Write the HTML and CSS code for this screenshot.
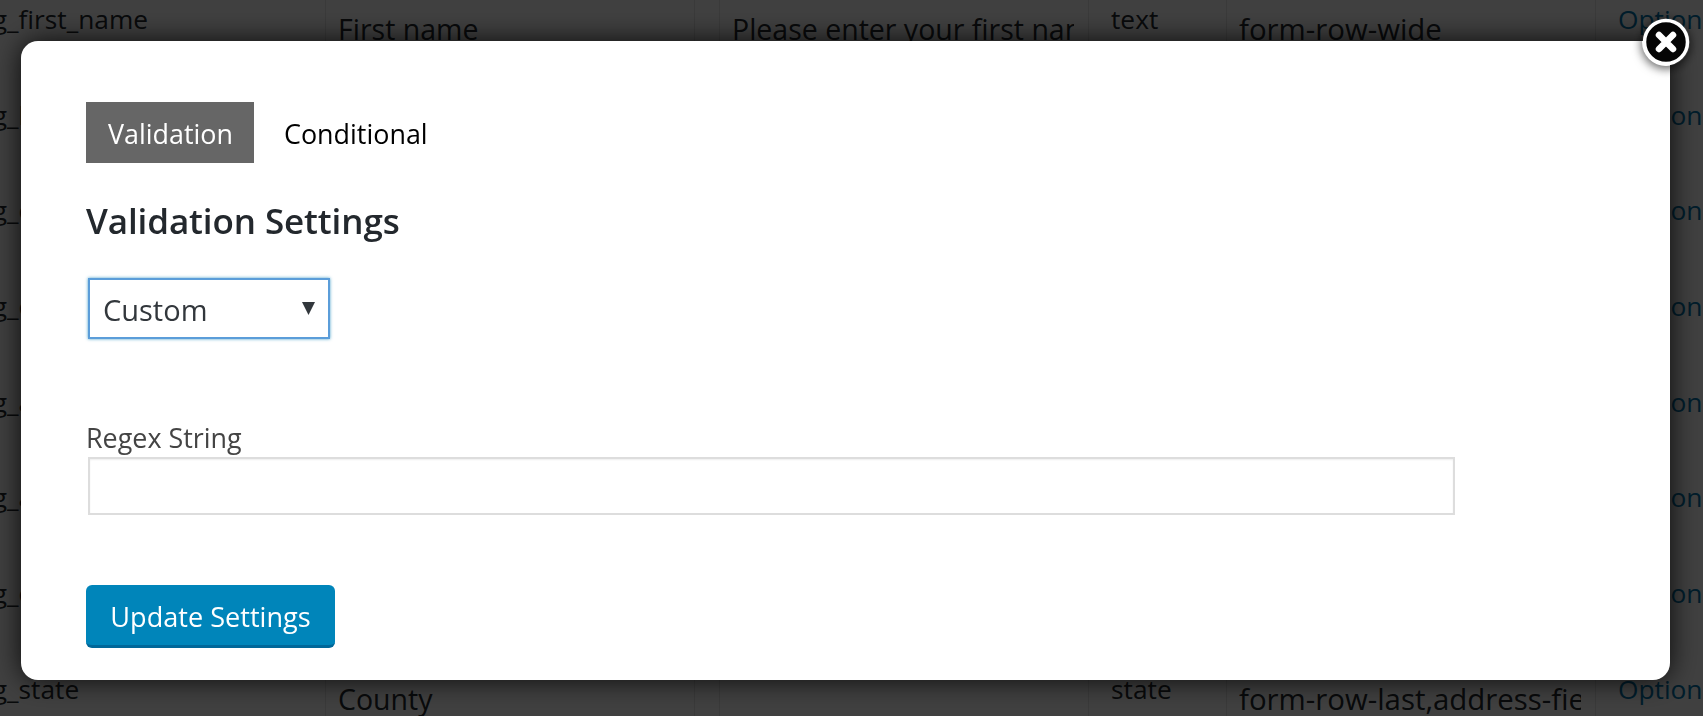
FILE: index.html
```
<!DOCTYPE html>
<html lang="en">
<head>
<meta charset="utf-8">
<title>Validation Settings</title>
<link rel="stylesheet" href="styles.css">
</head>
<body>
<div class="fields">
  <div class="row"><div class="cell key">billing_first_name</div><div class="cell box"><span class="val">First name</span></div><div class="gap"></div><div class="cell box"><span class="val">Please enter your first name</span></div><div class="cell type">text</div><div class="cell box wide"><span class="val">form-row-wide</span></div><div class="cell opt"><a>Options</a></div></div>
  <div class="row"><div class="cell key">billing_last_name</div><div class="cell box"><span class="val">Last name</span></div><div class="gap"></div><div class="cell box"><span class="val">Please enter your last name</span></div><div class="cell type">text</div><div class="cell box wide"><span class="val">form-row-wide</span></div><div class="cell opt"><a>Options</a></div></div>
  <div class="row"><div class="cell key">billing_company</div><div class="cell box"><span class="val">Company</span></div><div class="gap"></div><div class="cell box"></div><div class="cell type">text</div><div class="cell box wide"><span class="val">form-row-wide</span></div><div class="cell opt"><a>Options</a></div></div>
  <div class="row"><div class="cell key">billing_country</div><div class="cell box"><span class="val">Country</span></div><div class="gap"></div><div class="cell box"></div><div class="cell type">country</div><div class="cell box wide"><span class="val">form-row-wide</span></div><div class="cell opt"><a>Options</a></div></div>
  <div class="row"><div class="cell key">billing_address_1</div><div class="cell box"><span class="val">Address</span></div><div class="gap"></div><div class="cell box"></div><div class="cell type">text</div><div class="cell box wide"><span class="val">form-row-wide</span></div><div class="cell opt"><a>Options</a></div></div>
  <div class="row"><div class="cell key">billing_address_2</div><div class="cell box"><span class="val">Address 2</span></div><div class="gap"></div><div class="cell box"></div><div class="cell type">text</div><div class="cell box wide"><span class="val">form-row-wide</span></div><div class="cell opt"><a>Options</a></div></div>
  <div class="row"><div class="cell key">billing_city</div><div class="cell box"><span class="val">City</span></div><div class="gap"></div><div class="cell box"></div><div class="cell type">text</div><div class="cell box wide"><span class="val">form-row-wide</span></div><div class="cell opt"><a>Options</a></div></div>
  <div class="row"><div class="cell key">billing_state</div><div class="cell box"><span class="val">County</span></div><div class="gap"></div><div class="cell box"></div><div class="cell type">state</div><div class="cell box wide"><span class="val">form-row-last,address-field</span></div><div class="cell opt"><a>Options</a></div></div>
</div>
<div class="overlay"></div>
<div class="modal">
  <button class="close" type="button" aria-label="Close">
    <svg viewBox="0 0 48 48" width="48" height="48" aria-hidden="true"><circle cx="24" cy="24" r="21.5" fill="#050505" stroke="#fff" stroke-width="3.5"/><path d="M17 17L31 31M31 17L17 31" stroke="#fff" stroke-width="6.5" stroke-linecap="round" fill="none"/></svg>
  </button>
  <nav class="tabs"><a class="tab active">Validation</a><a class="tab">Conditional</a></nav>
  <h2 class="title">Validation Settings</h2>
  <div class="select-wrap">
    <select class="select"><option>Custom</option></select>
    <svg class="caret" viewBox="0 0 13 13" width="13" height="13" aria-hidden="true"><path d="M0 0H13L6.5 13Z" fill="#32373c"/></svg>
  </div>
  <label class="label" for="regex">Regex String</label>
  <input class="input" id="regex" type="text">
  <button class="submit" type="button">Update Settings</button>
</div>
</body>
</html>
```
FILE: styles.css
```
html, body { margin: 0; padding: 0; height: 100%; overflow: hidden; background: #fff; }
body { font-family: "Open Sans", "Noto Sans", sans-serif; color: #23282d; }

.fields { margin: -15px 0 0 -80px; width: 1860px; }
.row { display: flex; height: 95.7px; }
.cell { box-sizing: border-box; height: 100%; white-space: nowrap; overflow: hidden; flex: none; }
.key { width: 406px; border-right: 1px solid #e5e5e5; padding: 17px 0 0 14px; font-size: 26.3px; line-height: 34px; }
.box { width: 369px; padding: 24px 14px 0 12px; font-size: 28.5px; line-height: 40px; border-right: 1px solid #e5e5e5; }
.box.wide { font-size: 29.4px; }
.val { display: block; overflow: hidden; }
.gap { width: 25px; flex: none; border-right: 1px solid #e5e5e5; box-sizing: border-box; }
.type { width: 138px; padding: 17px 0 0 22px; font-size: 26.3px; line-height: 34px; border-right: 1px solid #e5e5e5; }
.opt { width: 200px; padding: 17px 0 0 22px; font-size: 26.3px; line-height: 34px; color: #0073aa; }

.overlay { position: fixed; inset: 0; background: rgba(0, 0, 0, .75); }

.modal { position: fixed; left: 21px; top: 41px; width: 1649px; height: 639px; box-sizing: border-box; padding: 61px 65px 0; background: #fff; border-radius: 17px; box-shadow: 0 0 28px rgba(0, 0, 0, .85); }
.close { position: absolute; top: -23px; right: -20px; width: 48px; height: 48px; padding: 0; border: 0; background: none; border-radius: 50%; box-shadow: 0 2px 10px 1px rgba(0, 0, 0, .6); }
.close svg { display: block; filter: blur(.5px); }

.tabs { display: flex; height: 61px; }
.tab { display: block; padding: 2px 30px 0 30px; font-size: 26.9px; line-height: 59px; color: #000; }
.tab.active { padding: 2px 21px 0 22px; background: #666; color: #fff; }
.title { margin: 35px 0 0; font-size: 35px; line-height: 46px; font-weight: 600; color: #23282d; letter-spacing: -.1px; }

.select-wrap { position: relative; width: 242px; height: 61px; margin: 34px 0 0 2px; }
.select { display: block; box-sizing: border-box; width: 100%; height: 100%; margin: 0; padding: 2px 0 0 13px; appearance: none; -webkit-appearance: none; background: #fff; border: 2px solid #5b9dd9; border-radius: 0; box-shadow: 0 0 3px rgba(30, 140, 190, .8); outline: 0; font: 29px "Open Sans", sans-serif; color: #32373c; }
.caret { position: absolute; left: 214px; top: 24px; }

.label { display: block; margin: 82px 0 0; padding-bottom: 2px; font-size: 26.9px; line-height: 34px; color: #444; }
.input { display: block; box-sizing: border-box; width: 1367px; height: 58px; margin: 0 0 0 2px; padding: 0 12px; background: #fff; border: 2px solid #ddd; border-radius: 0; box-shadow: inset 0 1px 2px rgba(0, 0, 0, .07); outline: 0; }

.submit { display: block; box-sizing: border-box; width: 249px; height: 63px; margin: 70px 0 0; padding: 3px 0 0; background: #0085ba; border: 0; border-bottom: 3px solid #006799; border-radius: 6px; font: 27.1px "Open Sans", sans-serif; color: #fff; }
```
